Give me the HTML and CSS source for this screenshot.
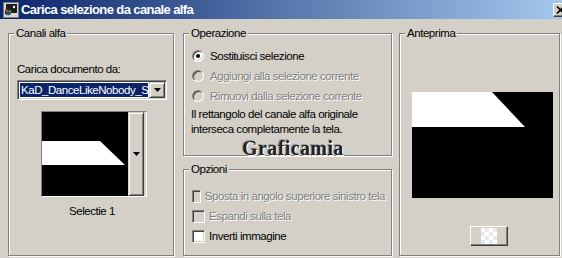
FILE: index.html
```html
<!DOCTYPE html>
<html>
<head>
<meta charset="UTF-8">
<title>Carica selezione da canale alfa</title>
<link rel="stylesheet" href="styles.css">
</head>
<body>

	<div class="dialog">
		<div class="titlebar">
			<svg class="app-icon" width="16" height="16" viewBox="0 0 16 16">
				<rect x="0.5" y="0.5" width="15" height="15" fill="#d8d8d8" stroke="#7a7a7a"/>
				<rect x="3" y="2" width="11" height="9" fill="#1c1c1c"/>
				<circle cx="5" cy="10" r="3.2" fill="#2a2a2a"/>
				<circle cx="4" cy="9" r="1.3" fill="#e23a2a"/>
				<circle cx="7" cy="9.5" r="1.3" fill="#2fb34a"/>
				<circle cx="5" cy="12" r="1.3" fill="#2a5ae0"/>
				<circle cx="11" cy="5" r="1.2" fill="#fff"/>
			</svg>
			<span class="title">Carica selezione da canale alfa</span>
			<span class="close-btn">
				<svg width="14" height="12" viewBox="0 0 14 12">
					<path d="M3 2.5 L10 9.5 M10 2.5 L3 9.5" stroke="#000" stroke-width="1.7"/>
				</svg>
			</span>
		</div>

		<div class="content">
			<!-- canali alfa -->
			<div class="group channels">
				<span class="group-title">Canali alfa</span>
				<div>Carica documento da:</div>
				<div class="combo">
					<span class="combo-text">KaD_DanceLikeNobody_Selectie</span>
					<span class="btn combo-btn">
						<svg width="7" height="4" viewBox="0 0 7 4"><polygon points="0,0 7,0 3.5,4" fill="#000"/></svg>
					</span>
				</div>
				<div class="thumb">
					<svg width="86" height="84" viewBox="0 0 86 84">
						<rect width="86" height="84" fill="#000"/>
						<polygon points="0,29 58,29 83,53 0,53" fill="#fff"/>
					</svg>
					<span class="btn thumb-btn">
						<svg width="7" height="4" viewBox="0 0 7 4"><polygon points="0,0 7,0 3.5,4" fill="#000"/></svg>
					</span>
				</div>
				<div class="caption">Selectie 1</div>
			</div>

			<div class="middle">
				<div class="group operation">
					<span class="group-title">Operazione</span>
					<div class="option"><span class="radio on"></span>Sostituisci selezione</div>
					<div class="option disabled"><span class="radio"></span>Aggiungi alla selezione corrente</div>
					<div class="option disabled"><span class="radio"></span>Rimuovi dalla selezione corrente</div>
					<p class="note">Il rettangolo del canale alfa originale<br>interseca completamente la tela.</p>
				</div>
				<div class="group options">
					<span class="group-title">Opzioni</span>
					<div class="option disabled"><span class="check"></span>Sposta in angolo superiore sinistro tela</div>
					<div class="option disabled"><span class="check"></span>Espandi sulla tela</div>
					<div class="option"><span class="check"></span>Inverti immagine</div>
				</div>
				<div class="watermark">Graficamia</div>
			</div>

			<!-- anteprima -->
			<div class="group preview">
				<span class="group-title">Anteprima</span>
				<svg class="preview-img" width="141" height="106" viewBox="0 0 141 106">
					<rect width="141" height="106" fill="#000"/>
					<polygon points="0,0 80,0 113,35 0,35" fill="#fff"/>
				</svg>
				<span class="btn preview-btn">
					<svg width="16" height="16" viewBox="0 0 16 16">
						<rect width="16" height="16" fill="#e9e9e9"/>
						<rect x="0" y="0" width="4" height="4" fill="#fff"/>
						<rect x="8" y="0" width="4" height="4" fill="#fff"/>
						<rect x="4" y="4" width="4" height="4" fill="#fff"/>
						<rect x="12" y="4" width="4" height="4" fill="#fff"/>
						<rect x="0" y="8" width="4" height="4" fill="#fff"/>
						<rect x="8" y="8" width="4" height="4" fill="#fff"/>
						<rect x="4" y="12" width="4" height="4" fill="#fff"/>
						<rect x="12" y="12" width="4" height="4" fill="#fff"/>
					</svg>
				</span>
			</div>
		</div>
	</div>

</body>
</html>
```

FILE: styles.css
```css
html, body{
	margin: 0;
	overflow: hidden;
	background-color: #d4d0c8;
}
.dialog{
	width: 572px;
	height: 258px;
	font-family: "Liberation Sans", Arial, sans-serif;
	font-size: 11.5px;
	letter-spacing: -0.45px;
	line-height: 14px;
	color: #000;
}

/* barra del titolo */
.titlebar{
	display: flex;
	align-items: center;
	height: 19px;
	padding: 0 3px 0 3px;
	background: linear-gradient(to right, #0a246a, #a6caf0);
}
.app-icon{
	margin-right: 2px;
}
.title{
	color: #fff;
	font-weight: bold;
	font-size: 13px;
	letter-spacing: -0.6px;
}
.close-btn{
	margin-left: auto;
	width: 16px;
	height: 14px;
	box-sizing: border-box;
	display: flex;
	align-items: center;
	justify-content: center;
	background-color: #d4d0c8;
	border: 1px solid;
	border-color: #fff #404040 #404040 #fff;
	box-shadow: inset -1px -1px 0 #808080;
}

.content{
	display: flex;
	align-items: flex-start;
	padding: 14px 0 0 8px;
}

/* riquadri */
.group{
	position: relative;
	box-sizing: border-box;
	border: 1px solid #808080;
	box-shadow: inset 1px 1px 0 #fff, 1px 1px 0 #fff;
}
.group-title{
	position: absolute;
	top: -8px;
	left: 5px;
	padding: 0 2px;
	background-color: #d4d0c8;
}

.btn{
	box-sizing: border-box;
	display: flex;
	align-items: center;
	justify-content: center;
	background-color: #d4d0c8;
	border: 1px solid;
	border-color: #d4d0c8 #404040 #404040 #d4d0c8;
	box-shadow: inset 1px 1px 0 #fff, inset -1px -1px 0 #808080;
}

.channels{
	width: 166px;
	height: 223px;
	padding: 28px 6px 0 8px;
}
.combo{
	display: flex;
	width: 150px;
	height: 20px;
	margin-top: 4px;
	padding: 1px;
	box-sizing: border-box;
	background-color: #fff;
	border: 1px solid;
	border-color: #808080 #fff #fff #808080;
	box-shadow: inset 1px 1px 0 #404040, inset -1px -1px 0 #d4d0c8;
}
.combo-text{
	flex: 1;
	margin: 1px;
	padding-left: 1px;
	overflow: hidden;
	white-space: nowrap;
	color: #fff;
	background-color: #0a246a;
	line-height: 14px;
}
.combo-btn{
	width: 16px;
	height: 16px;
}
.thumb{
	display: flex;
	width: 104px;
	margin: 11px 0 0 24px;
	border: 1px solid;
	border-color: #808080 #fff #fff #808080;
}
.thumb svg{
	display: block;
}
.thumb-btn{
	width: 16px;
	height: 84px;
}
.caption{
	margin-top: 7px;
	text-align: center;
}

.middle{
	position: relative;
	display: flex;
	flex-direction: column;
	width: 209px;
	margin-left: 9px;
}
.operation{
	height: 123px;
	padding: 12px 6px 0 7px;
}
.options{
	height: 87px;
	margin-top: 13px;
	padding: 16px 6px 0 7px;
}
.option{
	display: flex;
	align-items: center;
	height: 20px;
	white-space: nowrap;
}
.option.disabled{
	color: #808080;
	text-shadow: 1px 1px 0 #fff;
}
.radio, .check{
	box-sizing: border-box;
	display: flex;
	align-items: center;
	justify-content: center;
	margin-left: 1px;
	background-color: #fff;
	border: 1px solid;
	border-color: #808080 #fff #fff #808080;
	box-shadow: inset 1px 1px 0 #404040, inset -1px -1px 0 #d4d0c8;
}
.radio{
	width: 12px;
	height: 12px;
	margin-right: 6px;
	border-radius: 50%;
}
.check{
	width: 13px;
	height: 13px;
	margin-right: 4px;
}
.disabled .radio, .disabled .check{
	background-color: #d4d0c8;
}
.radio.on::after{
	content: "";
	width: 4px;
	height: 4px;
	border-radius: 50%;
	background-color: #000;
}
.note{
	margin: 1px 0 0 0;
	line-height: 15px;
}
.watermark{
	position: absolute;
	top: 105px;
	left: 59px;
	font-family: "Liberation Serif", "Times New Roman", serif;
	font-weight: bold;
	font-size: 20px;
	line-height: 20px;
	letter-spacing: 0.4px;
	color: #222;
	text-shadow: 1px 1px 0 #fff, -1px -1px 0 #9a9a9a;
}

.preview{
	width: 161px;
	height: 223px;
	margin-left: 7px;
	padding: 58px 0 0 12px;
}
.preview-img{
	display: block;
}
.preview-btn{
	width: 38px;
	height: 20px;
	margin: 28px 0 0 58px;
	border-color: #fff #404040 #404040 #fff;
	box-shadow: inset -1px -1px 0 #808080;
}
```
